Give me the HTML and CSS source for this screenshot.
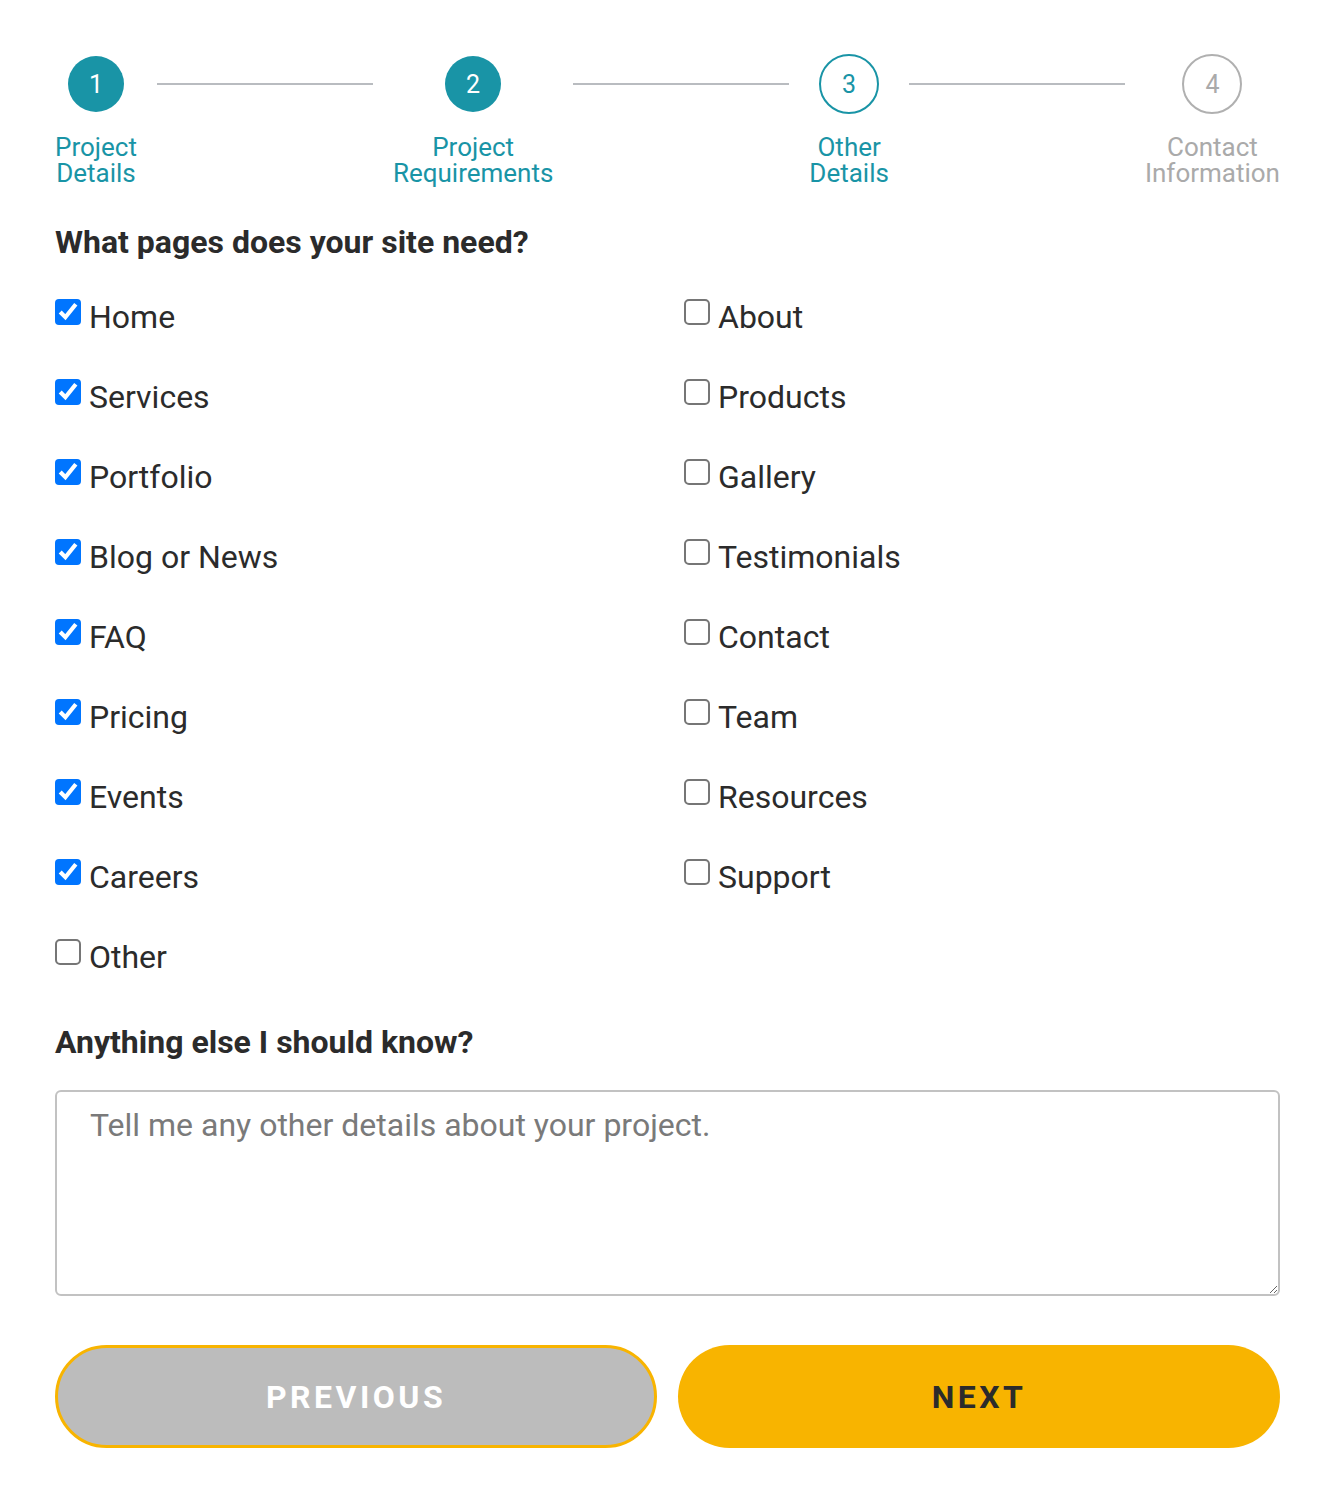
FILE: index.html
```html
<!DOCTYPE html>
<html lang="en">
<head>
<meta charset="utf-8">
<title>Project form</title>
<link rel="stylesheet" href="styles.css">
</head>
<body>
<form class="form">
  <div class="stepper">
    <div class="step done">
      <div class="dot-wrap"><span class="dot">1</span></div>
      <div class="step-label">Project<br>Details</div>
    </div>
    <div class="line"></div>
    <div class="step done">
      <div class="dot-wrap"><span class="dot">2</span></div>
      <div class="step-label">Project<br>Requirements</div>
    </div>
    <div class="line"></div>
    <div class="step current">
      <div class="dot-wrap"><span class="dot">3</span></div>
      <div class="step-label">Other<br>Details</div>
    </div>
    <div class="line"></div>
    <div class="step todo">
      <div class="dot-wrap"><span class="dot">4</span></div>
      <div class="step-label">Contact<br>Information</div>
    </div>
  </div>

  <h2 class="question q1">What pages does your site need?</h2>

  <div class="options">
    <div class="col">
      <label class="opt"><input type="checkbox" checked><span>Home</span></label>
      <label class="opt"><input type="checkbox" checked><span>Services</span></label>
      <label class="opt"><input type="checkbox" checked><span>Portfolio</span></label>
      <label class="opt"><input type="checkbox" checked><span>Blog or News</span></label>
      <label class="opt"><input type="checkbox" checked><span>FAQ</span></label>
      <label class="opt"><input type="checkbox" checked><span>Pricing</span></label>
      <label class="opt"><input type="checkbox" checked><span>Events</span></label>
      <label class="opt"><input type="checkbox" checked><span>Careers</span></label>
      <label class="opt"><input type="checkbox"><span>Other</span></label>
    </div>
    <div class="col">
      <label class="opt"><input type="checkbox"><span>About</span></label>
      <label class="opt"><input type="checkbox"><span>Products</span></label>
      <label class="opt"><input type="checkbox"><span>Gallery</span></label>
      <label class="opt"><input type="checkbox"><span>Testimonials</span></label>
      <label class="opt"><input type="checkbox"><span>Contact</span></label>
      <label class="opt"><input type="checkbox"><span>Team</span></label>
      <label class="opt"><input type="checkbox"><span>Resources</span></label>
      <label class="opt"><input type="checkbox"><span>Support</span></label>
    </div>
  </div>

  <h2 class="question q2">Anything else I should know?</h2>

  <textarea class="details" placeholder="Tell me any other details about your project."></textarea>

  <div class="buttons">
    <button type="button" class="btn prev">PREVIOUS</button>
    <button type="button" class="btn next">NEXT</button>
  </div>
</form>
</body>
</html>
```

FILE: styles.css
```css
* { box-sizing: border-box; }

html, body {
  margin: 0;
  background: #ffffff;
}

body {
  font-family: Roboto, "Liberation Sans", Arial, sans-serif;
  color: #2b2b2b;
}

.form {
  padding: 54px 46px 50px 55px;
}

/* Stepper */
.stepper {
  display: flex;
  align-items: flex-start;
}

.step {
  display: flex;
  flex-direction: column;
  align-items: center;
}

.dot-wrap {
  height: 60px;
  display: flex;
  align-items: center;
  justify-content: center;
}

.dot {
  width: 56px;
  height: 56px;
  border-radius: 50%;
  display: flex;
  align-items: center;
  justify-content: center;
  font-size: 25px;
  line-height: 1;
}

.done .dot {
  background: #1994a6;
  color: #ffffff;
}

.current .dot,
.todo .dot {
  width: 60px;
  height: 60px;
  border: 2px solid #1994a6;
  color: #1994a6;
}

.todo .dot {
  border-color: #b0b0b0;
  color: #aaaaaa;
}

.step-label {
  margin-top: 20px;
  font-size: 26px;
  line-height: 26px;
  text-align: center;
  color: #1994a6;
}

.todo .step-label {
  color: #aaaaaa;
}

.line {
  flex: 1;
  height: 2px;
  margin: 29px 20px 0;
  background: #b9bcc0;
}

/* Questions */
.question {
  margin: 0;
  font-size: 32px;
  line-height: 38px;
  font-weight: 700;
  color: #2b2b2b;
}

.q1 { margin-top: 37px; }
.q2 { margin-top: 47px; }

.options {
  display: grid;
  grid-template-columns: 1fr 1fr;
  column-gap: 33px;
  margin-top: 37px;
}

.col {
  display: flex;
  flex-direction: column;
  gap: 42px;
}

.opt {
  display: flex;
  align-items: flex-start;
  gap: 8px;
  font-size: 32px;
  line-height: 38px;
  color: #2b2b2b;
}

.opt input {
  width: 13px;
  height: 13px;
  zoom: 2;
  margin: 0.5px 0 0 0;
  flex: none;
}

/* Textarea */
.details {
  display: block;
  width: 100%;
  height: 206px;
  margin-top: 29px;
  padding: 14px 33px;
  border: 2px solid #c2c2c2;
  border-radius: 6px;
  font-family: Roboto, "Liberation Sans", Arial, sans-serif;
  font-size: 32px;
  line-height: 38px;
  color: #2b2b2b;
}

.details::placeholder {
  color: #7a7a7a;
}

/* Buttons */
.buttons {
  display: grid;
  grid-template-columns: 1fr 1fr;
  column-gap: 21px;
  margin-top: 49px;
}

.btn {
  height: 103px;
  border-radius: 52px;
  font-family: Roboto, "Liberation Sans", Arial, sans-serif;
  font-size: 32px;
  font-weight: 700;
  letter-spacing: 3.5px;
  cursor: pointer;
}

.prev {
  background: #bcbcbc;
  border: 3px solid #f8b400;
  color: #ffffff;
}

.next {
  background: #f8b400;
  border: none;
  color: #2b2b2b;
}
```
